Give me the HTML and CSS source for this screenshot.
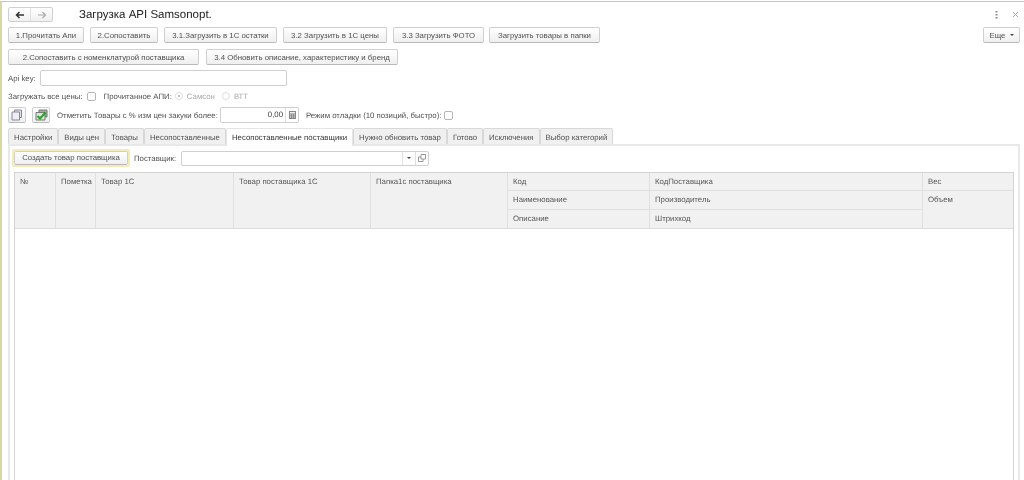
FILE: index.html
```html
<!DOCTYPE html>
<html lang="ru">
<head>
  <meta charset="UTF-8">
  <title>Загрузка API Samsonopt.</title>
  <link rel="stylesheet" href="styles.css">
</head>
<body>
  <div class="form">
    <!-- Title bar -->
    <div class="title-bar">
      <div class="nav-box">
        <span class="nav-cell">
          <svg width="10" height="8" viewBox="0 0 10 8"><path d="M9 4H2M4.500 1L1.500 4l3 3" fill="none" stroke="#333" stroke-width="1.500"/></svg>
        </span>
        <span class="nav-cell">
          <svg width="10" height="8" viewBox="0 0 10 8"><path d="M1 4h7M5.500 1l3 3-3 3" fill="none" stroke="#aaa" stroke-width="1.200"/></svg>
        </span>
      </div>
      <div class="title">Загрузка API Samsonopt.</div>
      <div class="window-btns">
        <svg width="3" height="8" viewBox="0 0 3 8"><path d="M0.500 0h2v1.500h-2zM0.500 3h2v1.500h-2zM0.500 6h2v1.500h-2z" fill="#888"/></svg>
        <svg width="7" height="7" viewBox="0 0 7 7"><path d="M1 1l5 5M6 1L1 6" stroke="#aaa" stroke-width="1"/></svg>
      </div>
    </div>

    <!-- Command buttons -->
    <div class="cmd-row">
      <button class="btn">1.Прочитать Апи</button>
      <button class="btn">2.Сопоставить</button>
      <button class="btn">3.1.Загрузить в 1С остатки</button>
      <button class="btn">3.2 Загрузить в 1С цены</button>
      <button class="btn">3.3 Загрузить ФОТО</button>
      <button class="btn">Загрузить товары в папки</button>
      <button class="btn more-btn">Еще <span class="arrow"></span></button>
    </div>
    <div class="cmd-row-2">
      <button class="btn">2.Сопоставить с номенклатурой поставщика</button>
      <button class="btn">3.4 Обновить описание, характеристику и бренд</button>
    </div>

    <div class="api-row">
      <label class="lbl">Api key:</label>
      <div class="input api-input"></div>
    </div>

    <div class="opts-row">
      <span class="lbl">Загружать все цены:</span>
      <span class="check"></span>
      <span class="lbl opt-api">Прочитанное АПИ:</span>
      <span class="radio radio-on"></span>
      <span class="lbl-off">Самсон</span>
      <span class="radio radio-second"></span>
      <span class="lbl-off">ВТТ</span>
    </div>

    <div class="mark-row">
      <button class="btn icon-btn">
        <svg width="12" height="12" viewBox="0 0 12 12"><path d="M3.500 3V1h7v7.500H8.500" fill="#dfe3e8" stroke="#889" stroke-width="1"/><path d="M1 3h7.500v8H1z" fill="#eef0f3" stroke="#889" stroke-width="1"/></svg>
      </button>
      <button class="btn icon-btn">
        <svg width="13" height="12" viewBox="0 0 13 12"><path d="M4 1h8v7H4z" fill="#9fb0a0" stroke="#777" stroke-width="1"/><path d="M1 3.500h9v7.500H1z" fill="#d8ecd0" stroke="#777" stroke-width="1"/><path d="M2.500 7l2.500 2.500L10.500 3.500" fill="none" stroke="#2f9e2f" stroke-width="2"/></svg>
      </button>
      <span class="lbl mark-lbl">Отметить Товары с % изм цен закуки более:</span>
      <div class="input num-input">
        <span class="num">0,00</span>
        <span class="calc">
          <svg width="7" height="8" viewBox="0 0 7 8"><path d="M0 0h7v8H0z" fill="#888"/><path d="M1 1h5v1.500H1zM1 3.500h1v1H1zM3 3.500h1v1H3zM5 3.500h1v1H5zM1 5.500h1v1H1zM3 5.500h1v1H3zM5 5.500h1v1H5z" fill="#eee"/></svg>
        </span>
      </div>
      <span class="lbl debug-lbl">Режим отладки (10 позиций, быстро):</span>
      <span class="check"></span>
    </div>

    <!-- Tabs -->
    <div class="tabs">
      <div class="tab">Настройки</div>
      <div class="tab">Виды цен</div>
      <div class="tab">Товары</div>
      <div class="tab">Несопоставленные</div>
      <div class="tab active">Несопоставленные поставщики</div>
      <div class="tab">Нужно обновить товар</div>
      <div class="tab">Готово</div>
      <div class="tab">Исключения</div>
      <div class="tab">Выбор категорий</div>
    </div>

    <div class="tab-panel">
      <div class="panel-bar">
        <div class="focus-ring"><button class="btn create-btn">Создать товар поставщика</button></div>
        <span class="lbl supplier-lbl">Поставщик:</span>
        <div class="input supplier-input">
          <span class="sup-space"></span>
          <span class="sup-cell"><span class="arrow"></span></span>
          <span class="sup-cell">
            <svg width="8" height="8" viewBox="0 0 8 8"><path d="M3 .5h4.500V5H3zM.5 3H3M.5 3v4.500H5V5" fill="none" stroke="#999" stroke-width="1"/></svg>
          </span>
        </div>
      </div>

      <div class="grid-box">
        <div class="grid-head">
          <div class="th tall">№</div>
          <div class="th tall">Пометка</div>
          <div class="th tall">Товар 1С</div>
          <div class="th tall">Товар поставщика 1С</div>
          <div class="th tall">Папка1с поставщика</div>
          <div class="th">Код</div>
          <div class="th">КодПоставщика</div>
          <div class="th last">Вес</div>
          <div class="th">Наименование</div>
          <div class="th">Производитель</div>
          <div class="th last wide">Объем</div>
          <div class="th">Описание</div>
          <div class="th">Штрихкод</div>
        </div>
      </div>
    </div>
  </div>
</body>
</html>
```

FILE: styles.css
```css
* {
  margin: 0;
  padding: 0;
  box-sizing: border-box;
}

html, body {
  height: 480px;
  overflow: hidden;
}

body {
  font-family: "Liberation Sans", Arial, sans-serif;
  font-size: 7.8px;
  color: #505050;
  background: #fff;
  text-rendering: geometricPrecision;
}

/* Form frame */
.form {
  height: 480px;
  border-left: 2px solid #d8d8a4;
  border-top: 1px solid #c4c4c4;
  margin-top: 1px;
  padding: 5px 4px 0 6px;
  filter: blur(0.3px);
}

.title-bar {
  display: flex;
  align-items: center;
  height: 15px;
}

.nav-box {
  display: flex;
  width: 45px;
  height: 15px;
  border: 1px solid #d0d0d0;
  border-radius: 2px;
  background: linear-gradient(#fff, #f0f0f0);
}

.nav-cell {
  flex: 1;
  display: flex;
  align-items: center;
  justify-content: center;
}

.nav-cell + .nav-cell {
  border-left: 1px solid #e0e0e0;
}

.title {
  margin-left: 26px;
  font-size: 11.500px;
  color: #222;
}

.window-btns {
  margin-left: auto;
  margin-right: 1px;
  display: flex;
  align-items: center;
  gap: 14px;
}

/* Buttons */
.btn {
  height: 16px;
  font-family: inherit;
  font-size: 7.800px;
  color: #505050;
  border: 1px solid #cfcfcf;
  border-bottom-color: #b9b9b9;
  border-radius: 2px;
  background: linear-gradient(#fff, #efefef);
  white-space: nowrap;
}

.cmd-row {
  display: grid;
  grid-template-columns: 76px 68px 113px 104px 91px 110px 1fr 37px;
  column-gap: 6px;
  margin-top: 5px;
}

.cmd-row .btn:nth-child(6) {
  margin-left: -1px;
  width: 111px;
}

.more-btn {
  grid-column: 8;
}

.arrow {
  display: inline-block;
  width: 0;
  height: 0;
  margin-left: 2px;
  vertical-align: middle;
  border-left: 2px solid transparent;
  border-right: 2px solid transparent;
  border-top: 2px solid #444;
}

.cmd-row-2 {
  display: grid;
  grid-template-columns: 191px 192px;
  column-gap: 7px;
  margin-top: 6px;
}

/* Fields */
.lbl {
  color: #505050;
  white-space: nowrap;
}

.input {
  height: 16px;
  background: #fff;
  border: 1px solid #cfcfcf;
  border-radius: 2px;
}

.api-row {
  display: flex;
  align-items: center;
  margin-top: 5px;
}

.api-input {
  width: 247px;
  margin-left: 4px;
}

.opts-row {
  display: flex;
  align-items: center;
  height: 10px;
  margin-top: 5px;
}

.check {
  width: 9px;
  height: 9px;
  margin-left: 4px;
  background: #fff;
  border: 1px solid #b5b5b5;
  border-radius: 2px;
}

.opt-api {
  margin-left: 8px;
}

.radio {
  position: relative;
  width: 8px;
  height: 8px;
  margin-left: 3px;
  border: 1px solid #dcdcdc;
  border-radius: 50%;
}

.radio-on::after {
  content: "";
  position: absolute;
  left: 2px;
  top: 2px;
  width: 2px;
  height: 2px;
  background: #aaa;
  border-radius: 50%;
}

.radio-second {
  margin-left: 7px;
}

.lbl-off {
  margin-left: 4px;
  color: #a9a9a9;
}

.mark-row {
  display: flex;
  align-items: center;
  margin-top: 6px;
}

.icon-btn {
  width: 18px;
  margin-right: 6px;
  display: flex;
  align-items: center;
  justify-content: center;
}

.mark-lbl {
  margin-left: 1px;
  width: 163px;
}

.num-input {
  display: flex;
  justify-content: flex-end;
  width: 79px;
}

.num {
  line-height: 14px;
  padding-right: 2px;
  color: #444;
}

.calc {
  width: 13px;
  display: flex;
  align-items: center;
  justify-content: center;
  border-left: 1px solid #e0e0e0;
}

.debug-lbl {
  margin-left: 7px;
}

.debug-lbl + .check {
  margin-left: 3px;
}

/* Tabs: the panel's top edge is a line at the foot of the strip, the active tab covers it */
.tabs {
  display: flex;
  align-items: flex-start;
  margin-top: 5px;
  height: 18px;
  background: linear-gradient(#e8e8e8, #e8e8e8) bottom / 100% 2px no-repeat;
}

.tab {
  height: 16px;
  padding: 3px 5px 0;
  line-height: 11px;
  color: #505050;
  background: #f0f0f0;
  border: 1px solid #d8d8d8;
  border-bottom: none;
  border-radius: 2px 2px 0 0;
  white-space: nowrap;
}

.tab.active {
  background: #fff;
  height: 18px;
  color: #333;
  border-color: #e4e4e4;
}

.tab-panel {
  height: 340px;
  padding: 3px 4px 0 4px;
  border-left: 2px solid #e8e8e8;
  border-right: 2px solid #e8e8e8;
}

.panel-bar {
  display: flex;
  align-items: center;
}

.focus-ring {
  margin-left: -2px;
  border: 2px solid #f4ecb4;
  border-radius: 2px;
}

.create-btn {
  display: block;
  width: 114px;
  height: 14px;
  line-height: 12px;
}

.supplier-lbl {
  margin-left: 4px;
  width: 47px;
}

.supplier-input {
  display: flex;
  width: 248px;
  height: 15px;
}

.sup-space {
  flex: 1;
}

.sup-cell {
  width: 13px;
  display: flex;
  align-items: center;
  justify-content: center;
  border-left: 1px solid #e0e0e0;
}

.sup-cell .arrow {
  margin-left: 0;
}

/* Table */
.grid-box {
  height: 320px;
  margin-top: 5px;
  border: 1px solid #d4d4d4;
  border-bottom: none;
}

.grid-head {
  display: grid;
  grid-template-columns: 41px 40px 138px 137px 137px 142px 273px 1fr;
  grid-template-rows: 18px 19px 18px;
  background: #f1f1f1;
  border-bottom: 1px solid #dcdcdc;
}

.th {
  padding: 3px 5px 0;
  line-height: 11px;
  color: #555;
  border-right: 1px solid #e0e0e0;
  border-bottom: 1px solid #e0e0e0;
  white-space: nowrap;
  overflow: hidden;
}

.th.tall {
  grid-row: span 3;
  border-bottom: none;
}

.th.wide {
  grid-row: span 2;
  border-bottom: none;
}

.th.last {
  grid-column: 8;
  border-right: none;
}

.grid-head .th:nth-child(n+12) {
  border-bottom: none;
}
```
